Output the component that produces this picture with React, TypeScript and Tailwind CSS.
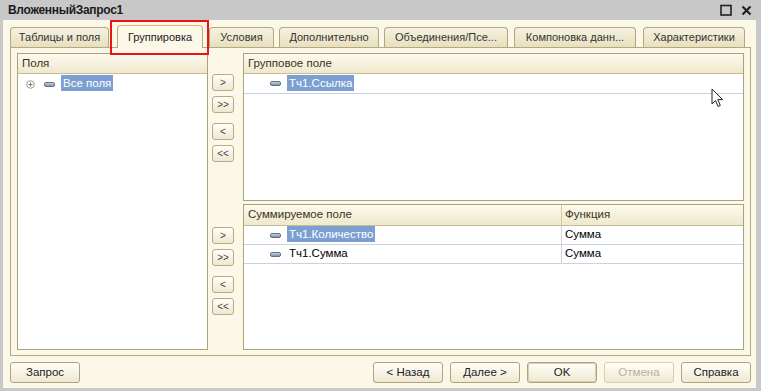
import React from 'react';

const font = "font-['Liberation_Sans',Arial,sans-serif]";

function Tab({ label, active, className }: { label: string; active?: boolean; className: string }) {
  if (active) {
    return (
      <div
        className={`relative z-10 -mb-px flex h-[23px] items-center justify-center rounded-t-[4px] border border-b-0 border-[#b3a87c] border-t-[#dcb66c] bg-[#fbf8e8] text-[11px] text-[#222] ${className}`}
      >
        {label}
      </div>
    );
  }
  return (
    <div
      className={`flex h-[20px] items-center justify-center rounded-t-[4px] border border-b-0 border-[#b3a87c] bg-gradient-to-b from-[#f6f2e0] to-[#e7dfbf] text-[11px] text-[#333] ${className}`}
    >
      {label}
    </div>
  );
}

function SmallBtn({ label, className = '' }: { label: string; className?: string }) {
  return (
    <div
      className={`flex h-[17px] w-[22px] items-center justify-center rounded-[3px] border border-[#b5ab86] bg-gradient-to-b from-[#fffef9] to-[#eee8d0] text-[10px] leading-none text-[#444] ${className}`}
    >
      {label}
    </div>
  );
}

function Btn({ label, disabled, primary }: { label: string; disabled?: boolean; primary?: boolean }) {
  return (
    <div
      className={`flex h-[21px] w-[70px] items-center justify-center rounded-[3px] border bg-gradient-to-b from-[#fffef8] to-[#efe9d3] text-[11.5px] ${
        disabled ? 'border-[#d6cfb4] text-[#b8b0a0]' : 'border-[#aea47f] text-[#222]'
      } ${primary ? 'border-[#9c9270] shadow-[inset_0_0_0_1px_#d8cfae]' : ''}`}
    >
      {label}
    </div>
  );
}

function Dash() {
  return <div className="h-[5px] w-[11px] rounded-[2px] border border-[#5f7088] bg-gradient-to-b from-[#c9d4e2] to-[#7f91a8]" />;
}

function Plus() {
  return (
    <svg width="9" height="9" viewBox="0 0 9 9">
      <circle cx="4.5" cy="4.5" r="3.8" fill="#fff" stroke="#9a9a9a" strokeWidth="1" />
      <path d="M2.5 4.5h4M4.5 2.5v4" stroke="#777" strokeWidth="1" />
    </svg>
  );
}

function Header({ children }: { children: React.ReactNode }) {
  return (
    <div className="flex h-[20px] shrink-0 items-center border-b border-[#c7bd95] bg-gradient-to-b from-[#fcfaef] to-[#efe8cc] px-[4px] text-[11.5px] text-[#3b3320]">
      {children}
    </div>
  );
}

function Selected({ children }: { children: React.ReactNode }) {
  return <span className="bg-[#7c9fd2] px-[2px] py-[2px] text-white">{children}</span>;
}

function Cursor() {
  return (
    <svg width="13" height="21" viewBox="0 0 13 21" className="absolute left-[711px] top-[88px]">
      <path
        d="M1 1 L1 16 L4.5 12.5 L7 18.5 L9.3 17.5 L6.8 11.6 L11.5 11.6 Z"
        fill="#fff"
        stroke="#222"
        strokeWidth="1"
        strokeLinejoin="round"
      />
    </svg>
  );
}

export default function App() {
  return (
    <div className={`relative flex h-[391px] w-[761px] flex-col overflow-hidden bg-[#c8c8c8] ${font}`}>
      {/* Title bar */}
      <div className="flex h-[20px] shrink-0 items-center justify-between pl-[8px] pr-[9px]">
        <span className="text-[12px] font-bold tracking-[-0.3px] text-[#1c1c1c]">ВложенныйЗапрос1</span>
        <div className="flex items-center gap-[9px]">
          <svg width="12" height="12" viewBox="0 0 12 12">
            <rect x="1" y="1.5" width="10" height="9.5" fill="none" stroke="#222" strokeWidth="1.6" />
          </svg>
          <svg width="11" height="11" viewBox="0 0 11 11">
            <path d="M1.5 1.5 L9.5 9.5 M9.5 1.5 L1.5 9.5" stroke="#222" strokeWidth="2.2" />
          </svg>
        </div>
      </div>

      {/* Window body */}
      <div className="mb-[3px] ml-[3px] mr-[5px] flex flex-1 flex-col bg-[#fbf8e8] pl-[7px] pr-[5px] pt-[6px]">
        {/* Tabs */}
        <div className="flex h-[21px] items-end">
          <Tab label="Таблицы и поля" className="w-[99px]" />
          <Tab label="Группировка" active className="ml-[8px] w-[86px]" />
          <Tab label="Условия" className="ml-[6px] w-[65px]" />
          <Tab label="Дополнительно" className="ml-[5px] w-[100px]" />
          <Tab label="Объединения/Псе..." className="ml-[5px] w-[124px]" />
          <Tab label="Компоновка данн..." className="ml-[6px] w-[122px]" />
          <Tab label="Характеристики" className="ml-[7px] w-[102px]" />
        </div>

        {/* Tab page */}
        <div className="flex h-[309px] border border-[#b3a97f] pl-[6px] pr-[6px] pt-[5px]">
          {/* Available fields */}
          <div className="flex h-[297px] w-[191px] flex-col border border-[#aca27c] bg-white">
            <Header>Поля</Header>
            <div className="flex h-[20px] items-center text-[11.5px]">
              <div className="ml-[8px] w-[18px]">
                <Plus />
              </div>
              <Dash />
              <div className="ml-[6px]">
                <Selected>Все поля</Selected>
              </div>
            </div>
          </div>

          <div className="ml-[4px] flex flex-col gap-[3px]">
            {/* Group fields */}
            <div className="flex h-[148px]">
              <div className="flex w-[22px] flex-col pt-[21px]">
                <SmallBtn label=">" />
                <SmallBtn label=">>" className="mt-[5px]" />
                <SmallBtn label="<" className="mt-[10px]" />
                <SmallBtn label="<<" className="mt-[5px]" />
              </div>
              <div className="ml-[9px] flex w-[501px] flex-col border border-[#aca27c] bg-white">
                <Header>Групповое поле</Header>
                <div className="flex h-[20px] items-center border-b border-[#c6d3e2] text-[11.5px]">
                  <div className="ml-[26px]">
                    <Dash />
                  </div>
                  <div className="ml-[6px]">
                    <Selected>Тч1.Ссылка</Selected>
                  </div>
                </div>
              </div>
            </div>

            {/* Summed fields */}
            <div className="flex h-[146px]">
              <div className="flex w-[22px] flex-col pt-[23px]">
                <SmallBtn label=">" />
                <SmallBtn label=">>" className="mt-[5px]" />
                <SmallBtn label="<" className="mt-[10px]" />
                <SmallBtn label="<<" className="mt-[5px]" />
              </div>
              <div className="ml-[9px] flex w-[501px] flex-col border border-[#aca27c] bg-white">
                <div className="flex h-[21px] shrink-0 border-b border-[#c7bd95] bg-gradient-to-b from-[#fcfaef] to-[#efe8cc] text-[11.5px] text-[#3b3320]">
                  <div className="flex w-[318px] items-center border-r border-[#d2c8a2] px-[4px]">Суммируемое поле</div>
                  <div className="flex flex-1 items-center px-[3px]">Функция</div>
                </div>
                {[
                  { name: 'Тч1.Количество', sel: true },
                  { name: 'Тч1.Сумма', sel: false },
                ].map((r) => (
                  <div key={r.name} className="flex h-[19px] border-b border-[#c6d3e2] text-[11.5px] text-black">
                    <div className="flex w-[318px] items-center border-r border-[#c6d3e2]">
                      <div className="ml-[26px]">
                        <Dash />
                      </div>
                      <div className="ml-[6px]">{r.sel ? <Selected>{r.name}</Selected> : <span className="px-[2px]">{r.name}</span>}</div>
                    </div>
                    <div className="flex flex-1 items-center px-[3px]">Сумма</div>
                  </div>
                ))}
              </div>
            </div>
          </div>
        </div>

        {/* Bottom buttons */}
        <div className="mt-[6px] flex items-center">
          <Btn label="Запрос" />
          <div className="ml-auto flex gap-[7px]">
            <Btn label="< Назад" />
            <Btn label="Далее >" />
            <Btn label="OK" primary />
            <Btn label="Отмена" disabled />
            <Btn label="Справка" />
          </div>
        </div>
      </div>

      {/* Highlight around the active tab */}
      <div className="absolute left-[110px] top-[20px] h-[35px] w-[99px] border-2 border-[#e8141a]" />

      <Cursor />
    </div>
  );
}
